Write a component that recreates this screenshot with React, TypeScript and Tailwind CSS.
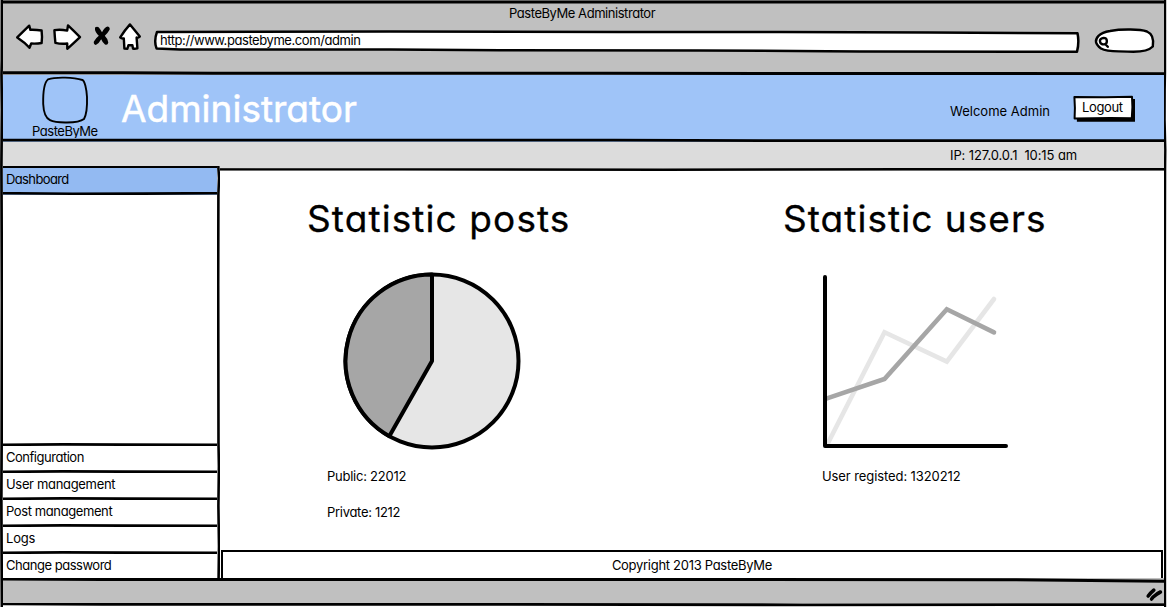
import type { ReactNode } from "react";

type RuleProps = { d: string; box: string; className: string; width?: number };

/* A hand-drawn straight line that stretches over the side of a panel. */
function Rule({ d, box, className, width = 2.8 }: RuleProps) {
  return (
    <svg viewBox={box} preserveAspectRatio="none" className={`block shrink-0 ${className}`} fill="none" stroke="#000" strokeWidth={width}>
      <path d={d} />
    </svg>
  );
}

const ink = { stroke: "#000", strokeWidth: 2.4, strokeLinejoin: "round", strokeLinecap: "round" } as const;

function Toolbar() {
  return (
    <div className="flex items-start pt-px">
      <svg viewBox="14 22 31 29" className="ml-[11px] h-[29px] w-[31px]" fill="#fff" {...ink}>
        <path d="M17.2 37.4 L29.2 25.7 L30.4 29.8 Q36 29.6 41.6 30.5 Q42.4 37 41.6 43 Q37 43.8 31.2 43.5 L29.5 47.8 Q25 42.5 17.2 37.4Z" />
      </svg>
      <svg viewBox="51 22 31 29" className="ml-[6px] h-[29px] w-[31px]" fill="#fff" {...ink}>
        <path d="M54.4 30.2 Q60 29 67.2 30.6 L68 25.4 Q74 31 80 37.2 Q74 43 67.3 48.8 L67.2 43.5 Q61 44.2 55.4 42.8 Q54.8 37 54.4 30.2Z" />
      </svg>
      <svg viewBox="92 22 20 29" className="ml-[10px] h-[29px] w-[20px]" fill="#000">
        <path d="M95 27.5 Q98 25.5 100 29 L102 32.2 Q104.5 27 107.8 26.4 Q110.3 27 109.6 29.8 Q107.5 33.5 104.8 35.8 Q108 39 108.3 42.5 Q107.8 45.6 105 44.6 Q102.5 42.5 101.2 39.2 Q98.8 43.8 95.8 45 Q93.2 44.6 93.9 41.6 Q95.7 38.2 98.8 35.8 Q94.4 31.5 95 27.5Z" />
      </svg>
      <svg viewBox="117 21 26 31" className="ml-[5px] -mt-px h-[31px] w-[26px]" fill="#fff" {...ink}>
        <path d="M130 24.4 Q134.5 30 139.8 36.6 Q138 38.2 136.6 37.6 L137.4 48.4 Q135 49 133 48.6 L132.4 45.2 L128.4 45.2 L127.4 48.8 L124.4 48.6 L123.8 38.4 Q121.5 38.8 120.2 37.4 Q124.5 30.5 130 24.4Z" />
      </svg>
      <div className="relative ml-[10px] mt-[8px] h-[24px] w-[928px]">
        <svg viewBox="153 30 928 24" className="absolute inset-0 h-full w-full" fill="#fff" stroke="#000" strokeWidth="2.5" strokeLinejoin="round">
          <path d="M157 31.9 L390 31.6 L620 31.9 L780 32 L930 32.6 L1077.5 33.2 Q1079.4 42 1077 51.8 L860 51.4 L700 50.5 L500 50.2 L390 49.5 L180 49.4 L156.6 48.6 Q153.6 41 157 31.9Z" />
        </svg>
        <p className="relative pl-[7px] pt-[2px] tracking-[-0.43px]">http://www.pastebyme.com/admin</p>
      </div>
      <svg viewBox="1093 26 63 29" className="ml-[12px] mt-[4px] h-[29px] w-[63px]" fill="#fff" {...ink}>
        <path d="M1110 31 C1122 28.8 1140 29.2 1147 31.5 C1153 34 1153.8 40 1152.8 46.5 C1149 50.5 1140 52.3 1128 51.6 C1118 50.8 1108 52.5 1101 48.5 C1095 44 1094.5 40 1098.5 35.8 C1101.5 32.8 1105 31.8 1110 31Z" />
        <path d="M1100 41.5 C1099.5 38.6 1103 37.6 1105 38.2 C1107.5 39 1107.4 43.4 1105 44.2 C1102 44.8 1100.3 43.6 1100 41.5Z M1105.2 44 L1107.8 46.8" />
      </svg>
    </div>
  );
}

function Logo() {
  return (
    <div className="flex w-[68px] flex-col items-center pt-px">
      <svg viewBox="41 76 48 48" className="h-[48px] w-[48px]" fill="none" stroke="#000" strokeWidth="1.9">
        <path d="M48 79.4 C56 76.6 74 77.4 82.5 80 C84.6 80.8 86.6 89 87 97 C87.3 106 86.2 115 84 119 C78 123.6 56 123.4 50 120.2 C45.5 118 43.6 113 43.2 104 C43 94 43.8 83 48 79.4Z" />
      </svg>
      <p className="-mt-px self-start pl-px tracking-[-0.47px]">PasteByMe</p>
    </div>
  );
}

function LogoutButton() {
  return (
    <button className="relative mt-[20px] flex h-[28px] w-[64px] items-start">
      <svg viewBox="1072 95 64 28" className="absolute inset-0 h-full w-full" strokeLinejoin="round">
        <path d="M1077 99 H1135 V121.8 H1076.9Z" fill="#000" />
        <path d="M1074.4 96.9 L1105 97.2 L1132 96.8 L1132.4 107 L1131.8 118.2 L1110 118 L1074.6 118.4 L1074.9 108Z" fill="#fff" stroke="#000" strokeWidth="2" />
      </svg>
      <span className="relative pl-[10px] pt-[4px] tracking-[-0.35px]">Logout</span>
    </button>
  );
}

function MenuItem({ children, spacing }: { children: ReactNode; spacing: string }) {
  return (
    <li>
      <Rule className="h-[3px] w-full bg-[#fff]" box="0 0 215 3" d="M0 1.8 L60 1.4 L120 1.6 L215 1.8" width={2.7} />
      <div className={`h-[24px] bg-white pl-[3px] pt-[3px] ${spacing}`}>{children}</div>
    </li>
  );
}

function Sidebar() {
  return (
    <aside className="relative z-10 -mt-[5px] flex w-[217px] shrink-0 bg-white">
      <div className="flex w-[214px] flex-col">
        <Rule className="h-[2px] w-full bg-[#9fc4f8]" box="0 0 215 2" d="M0 0.8 L70 1 L140 0.9 L215 1.1" width={2.4} />
        <div className="h-[24px] bg-[#93baf2] pl-[3px] pt-[3px] tracking-[-0.62px]">Dashboard</div>
        <Rule className="h-[3px] w-full bg-[#93baf2]" box="0 0 215 3" d="M0 1.2 L70 1.7 L140 1.6 L215 1.1" width={2.6} />
        <ul className="mt-auto">
          <MenuItem spacing="tracking-[-0.48px]">Configuration</MenuItem>
          <MenuItem spacing="tracking-[-0.33px]">User management</MenuItem>
          <MenuItem spacing="tracking-[-0.4px]">Post management</MenuItem>
          <MenuItem spacing="tracking-[-0.2px]">Logs</MenuItem>
          <MenuItem spacing="tracking-[-0.48px]">Change password</MenuItem>
        </ul>
      </div>
      <Rule className="h-full w-[3px]" box="0 0 3 412" d="M1.3 0 L2 12 L1.4 28 L1.2 120 L1.5 278 L1.9 300 L1.4 340 L2 380 L1.6 412" width={2.6} />
    </aside>
  );
}

function PieChart() {
  return (
    <svg viewBox="343 272 178 178" className="ml-[36px] mt-[31px] h-[178px] w-[178px]" stroke="#000" strokeWidth="4" strokeLinejoin="round">
      <circle cx="432" cy="361" r="86.5" fill="#e6e6e6" />
      <path d="M432 361 V274.5 A86.5 86.5 0 0 0 389.3 436.2Z" fill="#a6a6a6" />
    </svg>
  );
}

function LineChart() {
  return (
    <svg viewBox="823 272 186 178" className="ml-[40px] mt-[31px] h-[178px] w-[186px]" fill="none" strokeLinecap="round" strokeLinejoin="miter">
      <path d="M828 443 L884.5 332.2 L946.8 361.6 L994 299" stroke="#e6e6e6" strokeWidth="4.6" />
      <path d="M827 398.4 L884.5 379 L946.8 309.3 L994 332.4" stroke="#a6a6a6" strokeWidth="4.6" />
      <path d="M825 277 V446 H1006" stroke="#000" strokeWidth="4" strokeLinejoin="round" />
    </svg>
  );
}

export default function App() {
  return (
    <div className="flex h-[607px] w-[1167px] overflow-hidden bg-white font-['Inter',sans-serif] text-[13px] leading-[16px] text-black [font-feature-settings:'cv11']">
      <Rule className="h-full w-[3px] bg-[#c0c0c0]" box="0 0 3 607" d="M2 0 L1.9 60 L1.5 75 L2 110 L1.4 165 L2 300 L1.7 440 L1.3 500 L1.8 580 L2 607" width={2.6} />
      <div className="flex w-[1161px] flex-col">
        <Rule className="h-[4px] w-full bg-[#c0c0c0]" box="0 0 1161 4" d="M0 2 L300 1.9 L700 2 L1161 2" width={3} />
        <header className="h-[67px] bg-[#c0c0c0]">
          <p className="pl-[506px] pt-px tracking-[-0.45px]">PasteByMe Administrator</p>
          <Toolbar />
        </header>
        <Rule className="h-[4px] w-full bg-[#c0c0c0]" box="0 0 1161 4" d="M0 1.8 L120 1.8 L210 2.2 L600 2.3 L780 2.5 L1000 2.5 L1161 2.7" width={3} />
        <div className="flex h-[63px] bg-[#9fc4f8]">
          <div className="pl-[28px]"><Logo /></div>
          <h1 className="ml-[22px] mt-[12px] w-[240px] text-[37px] leading-[44px] tracking-[0px] text-white [-webkit-text-stroke:0.5px_white]">Administrator</h1>
          <p className="ml-auto mt-[28px] w-[122px] tracking-[0.01px]">Welcome Admin</p>
          <div className="mr-[28px]"><LogoutButton /></div>
        </div>
        <Rule className="h-[4px] w-full bg-[#9fc4f8]" box="0 0 1161 4" d="M0 2.1 L300 2.2 L610 2.2 L780 2.6 L1161 2.6" width={2.8} />
        <div className="h-[26px] whitespace-pre bg-[#dcdcdc] pl-[947px] pt-[5px] tracking-[-0.1px]">{"IP: 127.0.0.1  10:15 am"}</div>
        <Rule className="h-[3px] w-full bg-[#dcdcdc]" box="0 0 1161 3" d="M0 1.3 L400 1.4 L660 1.7 L900 1.3 L1161 1.3" width={2.4} />
        <div className="flex h-[407px]">
          <Sidebar />
          <main className="flex flex-1 flex-col">
            <div className="flex h-[379px] pl-[87px] pt-[26px]">
              <section className="w-[476px]">
                <h2 className="text-[37px] leading-[44px] tracking-[1.1px] [-webkit-text-stroke:0.3px_black]">Statistic posts</h2>
                <PieChart />
                <div className="flex flex-col gap-[20px] pl-[20px] pt-[18px]">
                  <p className="tracking-[-0.25px]">Public: 22012</p>
                  <p className="tracking-[-0.3px]">Private: 1212</p>
                </div>
              </section>
              <section>
                <h2 className="text-[37px] leading-[44px] tracking-[1.05px] [-webkit-text-stroke:0.3px_black]">Statistic users</h2>
                <LineChart />
                <p className="pl-[39px] pt-[18px] tracking-[-0.09px]">User registed: 1320212</p>
              </section>
            </div>
            <footer className="mr-px ml-px flex h-[28px] justify-center border-2 border-b-0 border-black bg-white pt-[5px] tracking-[-0.29px]">
              Copyright 2013 PasteByMe
            </footer>
          </main>
        </div>
        <Rule className="h-[5px] w-full bg-[#c0c0c0]" box="0 0 1161 5" d="M0 1 L100 1.5 L600 1.4 L1000 1.7 L1161 3.2" width={3} />
        <div className="flex h-[20px] justify-end bg-[#c0c0c0]">
          <svg viewBox="1144 587 18 16" className="mr-px mt-[4px] h-[16px] w-[18px]" fill="none" stroke="#000" strokeWidth="3.6" strokeLinecap="round">
            <path d="M1147.2 596 Q1149.5 593 1152.8 590.2 M1150.6 599 L1152.2 597 Q1155.8 593.6 1159.4 592" />
          </svg>
        </div>
        <Rule className="h-[4px] w-full bg-white" box="0 0 1161 4" d="M0 0.9 L100 1.3 L400 1.3 L800 1.8 L1161 1.6" width={2.8} />
      </div>
      <Rule className="h-full w-[3px] bg-white" box="0 0 3 607" d="M1 0 L1 72 L0.7 90 L0.6 120 L1.3 150 L1.1 168 L0.8 300 L1 607" width={2.4} />
    </div>
  );
}
